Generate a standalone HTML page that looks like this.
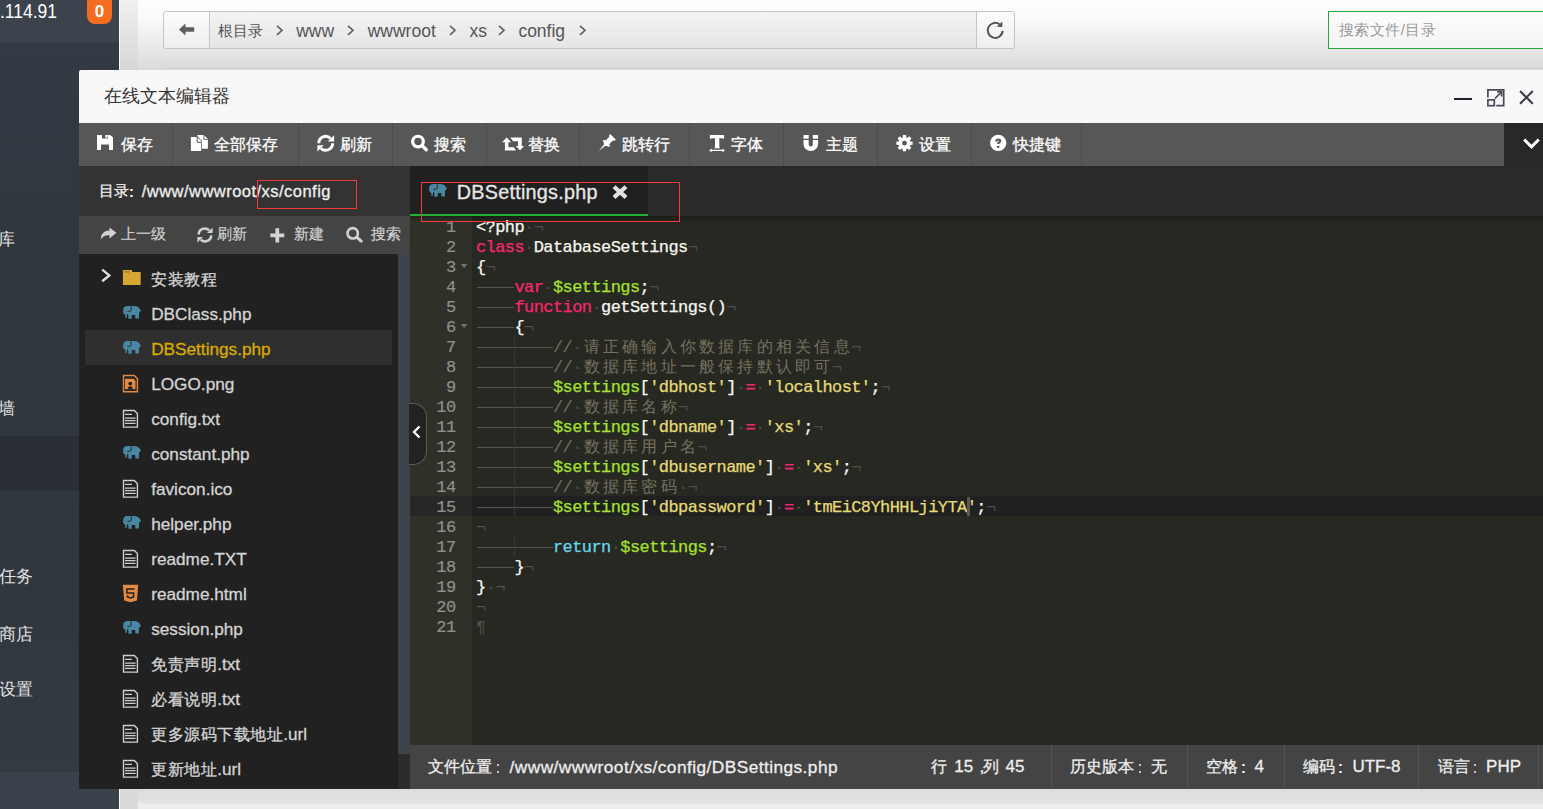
<!DOCTYPE html><html><head><meta charset="utf-8"><style>
*{box-sizing:border-box;margin:0;padding:0}
html,body{width:1543px;height:809px;overflow:hidden}
body{position:relative;background:#e4e4e4;font-family:"Liberation Sans",sans-serif;color:#333}
.a{position:absolute}
svg{position:absolute;display:block;overflow:visible}
.t{position:absolute;white-space:nowrap}
.mono{font-family:"Liberation Mono",monospace}
.cl{-webkit-text-stroke-width:0.25px;position:absolute;left:476px;height:20px;line-height:20px;font-family:"Liberation Mono",monospace;font-size:17px;letter-spacing:-0.58px;color:#f8f8f2;white-space:pre}
.ln{-webkit-text-stroke-width:0.2px;position:absolute;left:410px;width:45.6px;height:20px;line-height:20px;text-align:right;font-family:"Liberation Mono",monospace;font-size:17px;letter-spacing:-0.58px;color:#8f908a;white-space:pre}
.tb{display:inline-block;width:38.48px;height:20px;position:relative;vertical-align:top}
.tb:after{content:"";position:absolute;left:1px;right:0;top:9px;height:1px;background:#55554d}
.cj{display:inline-block;width:19.24px;letter-spacing:0;vertical-align:top;padding-left:1.8px;font-size:16px}
.c{-webkit-text-stroke-width:0}
.iv{color:#4f4e47;-webkit-text-stroke-width:0}
.k{color:#f92672}.v{color:#a6e22e}.s{color:#e6db74}.c{color:#75715e}.r{color:#66d9ef}
.red{position:absolute;border:1px solid #f33b3b}
.sk{-webkit-text-stroke-width:0.3px}
.sk2{-webkit-text-stroke-width:0.2px}
</style></head><body>
<div class="a" style="left:0;top:0;width:119px;height:809px;background:linear-gradient(#343a43 43px,#30363e 300px,#31373f 600px,#343a42 772px)"></div>
<div class="a" style="left:0;top:0;width:119px;height:43px;background:#3c434c"></div>
<div class="a" style="left:0;top:436px;width:119px;height:55px;background:#2a2f37"></div>
<div class="a" style="left:0;top:772px;width:119px;height:37px;background:#3c424b"></div>
<div class="t" style="left:-0.50px;top:11.17px;font-size:20.00px;line-height:0;color:#fff;letter-spacing:0.00px;transform:scaleX(0.875);transform-origin:0 0">.114.91</div>
<div class="a" style="left:87px;top:-6px;width:25px;height:30px;border-radius:8px;background:#f46d22"></div>
<div class="t" style="left:87px;top:2px;width:25px;text-align:center;font-size:17px;font-weight:bold;line-height:19px;color:#fff">0</div>
<div class="t" style="left:-35.60px;top:239.61px;font-size:17.00px;line-height:0;color:#e2e2e2;letter-spacing:0.00px;">数据库</div>
<div class="t" style="left:-35.60px;top:409.11px;font-size:17.00px;line-height:0;color:#e2e2e2;letter-spacing:0.00px;">防火墙</div>
<div class="t" style="left:-35.20px;top:577.31px;font-size:17.00px;line-height:0;color:#e2e2e2;letter-spacing:0.00px;">计划任务</div>
<div class="t" style="left:-35.20px;top:634.61px;font-size:17.00px;line-height:0;color:#e2e2e2;letter-spacing:0.00px;">软件商店</div>
<div class="t" style="left:-35.20px;top:690.11px;font-size:17.00px;line-height:0;color:#e2e2e2;letter-spacing:0.00px;">面板设置</div>
<div class="a" style="left:119px;top:0;width:19px;height:809px;background:linear-gradient(#f0f0f0,#d6d6d6 70px,#dadada)"></div>
<div class="a" style="left:119px;top:0;width:1px;height:809px;background:#fafafa"></div>
<div class="a" style="left:138px;top:0;width:1405px;height:70px;background:linear-gradient(#fefefe,#f9f9f9 20px,#dcdcdc 67px)"></div>
<div class="a" style="left:163px;top:68px;width:1380px;height:1px;background:#d0d0d0"></div>
<div class="a" style="left:163px;top:11px;width:852px;height:38px;border:1px solid #c4c4c4;border-radius:3px;background:linear-gradient(#f3f3f3,#e5e5e5);overflow:hidden"><div class="a" style="left:0;top:0;width:46px;height:36px;background:linear-gradient(#fcfcfc,#eeeeee);border-right:1px solid #c6c6c6"></div><div class="a" style="right:0;top:0;width:38px;height:36px;background:linear-gradient(#fcfcfc,#eeeeee);border-left:1px solid #c6c6c6"></div></div>
<svg style="left:179px;top:23px" width="16" height="14" viewBox="0 0 16 14"><path fill="#5e5e5e" d="M0,6.5 L6.5,0.5 V4.3 H15.2 V8.7 H6.5 V12.5 Z"/></svg>
<svg style="left:984px;top:19px" width="22" height="22" viewBox="0 0 22 22"><path fill="none" stroke="#555" stroke-width="2" d="M18.67,11.95 A7.5,7.5 0 1 1 15.6,5.3"/><path fill="#555" d="M12.6,7.7 L18.3,2.6 L18.3,7.9 Z"/></svg>
<div class="t" style="left:218.00px;top:31.00px;font-size:15.30px;line-height:0;color:#555;letter-spacing:0.00px;">根目录</div>
<div class="t" style="left:296.20px;top:30.94px;font-size:17.50px;line-height:0;color:#555;letter-spacing:0.00px;">www</div>
<div class="t" style="left:367.70px;top:30.94px;font-size:17.50px;line-height:0;color:#555;letter-spacing:0.00px;">wwwroot</div>
<div class="t" style="left:469.60px;top:30.94px;font-size:17.50px;line-height:0;color:#555;letter-spacing:0.00px;">xs</div>
<div class="t" style="left:518.40px;top:30.94px;font-size:17.50px;line-height:0;color:#555;letter-spacing:0.00px;">config</div>
<svg style="left:276.0px;top:25.3px" width="8" height="11" viewBox="0 0 8 11"><path fill="none" stroke="#646464" stroke-width="1.7" d="M1,0.8 L6,5.3 L1,9.8"/></svg>
<svg style="left:346.6px;top:25.3px" width="8" height="11" viewBox="0 0 8 11"><path fill="none" stroke="#646464" stroke-width="1.7" d="M1,0.8 L6,5.3 L1,9.8"/></svg>
<svg style="left:449.2px;top:25.3px" width="8" height="11" viewBox="0 0 8 11"><path fill="none" stroke="#646464" stroke-width="1.7" d="M1,0.8 L6,5.3 L1,9.8"/></svg>
<svg style="left:497.8px;top:25.3px" width="8" height="11" viewBox="0 0 8 11"><path fill="none" stroke="#646464" stroke-width="1.7" d="M1,0.8 L6,5.3 L1,9.8"/></svg>
<svg style="left:578.8px;top:25.3px" width="8" height="11" viewBox="0 0 8 11"><path fill="none" stroke="#646464" stroke-width="1.7" d="M1,0.8 L6,5.3 L1,9.8"/></svg>
<div class="a" style="left:1328px;top:11px;width:230px;height:38px;border:1px solid #2aa53c;background:linear-gradient(#fdfdfd,#f3f3f3)"></div>
<div class="t" style="left:1338.80px;top:30.40px;font-size:15.00px;line-height:0;color:#999;letter-spacing:0.50px;">搜索文件/目录</div>
<div class="a" style="left:138px;top:789px;width:1405px;height:20px;background:#ededed"></div>
<div class="a" style="left:138px;top:776px;width:1440px;height:28px;border-radius:7px;background:linear-gradient(#d9d9d9,#e2e2e2)"></div>
<div class="a" style="left:79px;top:70px;width:1464px;height:53px;background:#f8f8f8;border-top-left-radius:2px"></div>
<div class="t" style="left:104px;top:85px;font-size:18px;line-height:22px;color:#333">在线文本编辑器</div>
<div class="a" style="left:1454px;top:98px;width:18px;height:2px;background:#20202c"></div>
<svg style="left:1484px;top:86px" width="24" height="24" viewBox="0 0 24 24"><g fill="none" stroke="#4a4a56" stroke-width="1.7"><path d="M3.9,11.6 V3.9 H19.7 V19.7 H12.2"/><rect x="3.9" y="13.9" width="6.4" height="5.8"/><path d="M11,12.5 L17,6.5"/><path d="M13.2,5.9 H17.6 V10.4"/></g></svg>
<svg style="left:1515px;top:86px" width="24" height="24" viewBox="0 0 24 24"><path fill="none" stroke="#3a3a48" stroke-width="2" d="M5,5 L17.8,17.8 M17.8,5 L5,17.8"/></svg>
<div class="a" style="left:79px;top:123px;width:1425px;height:43px;background:#575757"></div>
<div class="a" style="left:1504px;top:123px;width:39px;height:43px;background:#282828"></div>
<svg style="left:1520px;top:136px" width="22" height="16" viewBox="0 0 22 16"><path fill="none" stroke="#fff" stroke-width="3" d="M4.2,3.5 L11.5,10.8 L18.8,3.5"/></svg>
<div class="a" style="left:172px;top:123px;width:1px;height:43px;background:#4b4b4b"></div>
<div class="a" style="left:298px;top:123px;width:1px;height:43px;background:#4b4b4b"></div>
<div class="a" style="left:392px;top:123px;width:1px;height:43px;background:#4b4b4b"></div>
<div class="a" style="left:486px;top:123px;width:1px;height:43px;background:#4b4b4b"></div>
<div class="a" style="left:579px;top:123px;width:1px;height:43px;background:#4b4b4b"></div>
<div class="a" style="left:689px;top:123px;width:1px;height:43px;background:#4b4b4b"></div>
<div class="a" style="left:783px;top:123px;width:1px;height:43px;background:#4b4b4b"></div>
<div class="a" style="left:877px;top:123px;width:1px;height:43px;background:#4b4b4b"></div>
<div class="a" style="left:971px;top:123px;width:1px;height:43px;background:#4b4b4b"></div>
<div class="a" style="left:1081px;top:123px;width:1px;height:43px;background:#4b4b4b"></div>
<div style="position:absolute;white-space:nowrap;left:120.6px;top:135px;font-size:16px;line-height:20px;color:#fff" class="t sk">保存</div>
<div style="position:absolute;white-space:nowrap;left:214.2px;top:135px;font-size:16px;line-height:20px;color:#fff" class="t sk">全部保存</div>
<div style="position:absolute;white-space:nowrap;left:340.0px;top:135px;font-size:16px;line-height:20px;color:#fff" class="t sk">刷新</div>
<div style="position:absolute;white-space:nowrap;left:433.8px;top:135px;font-size:16px;line-height:20px;color:#fff" class="t sk">搜索</div>
<div style="position:absolute;white-space:nowrap;left:527.6px;top:135px;font-size:16px;line-height:20px;color:#fff" class="t sk">替换</div>
<div style="position:absolute;white-space:nowrap;left:621.5px;top:135px;font-size:16px;line-height:20px;color:#fff" class="t sk">跳转行</div>
<div style="position:absolute;white-space:nowrap;left:731.2px;top:135px;font-size:16px;line-height:20px;color:#fff" class="t sk">字体</div>
<div style="position:absolute;white-space:nowrap;left:825.5px;top:135px;font-size:16px;line-height:20px;color:#fff" class="t sk">主题</div>
<div style="position:absolute;white-space:nowrap;left:919.0px;top:135px;font-size:16px;line-height:20px;color:#fff" class="t sk">设置</div>
<div style="position:absolute;white-space:nowrap;left:1012.9px;top:135px;font-size:16px;line-height:20px;color:#fff" class="t sk">快捷键</div>
<svg style="left:97px;top:135px" width="16" height="15" viewBox="0 0 16 15"><path fill="#ffffff" d="M0,0 H13 L16,2.3 V15 H12 V9.4 H4 V15 H0 Z"/><rect x="5" y="0" width="6" height="3.5" fill="#575757"/><rect x="8.3" y="0" width="2.3" height="2.7" fill="#ffffff"/></svg>
<svg style="left:186px;top:132px" width="26" height="22" viewBox="0 0 26 22"><path fill="#ffffff" d="M11.4,2.9 H17.9 L21.9,6.9 V16.7 H11.4 Z"/><path fill="none" stroke="#575757" stroke-width="0.9" d="M17.9,2.9 V7.3 H21.9"/><path fill="#575757" d="M4.2,4.2 H11.4 L15.9,8.7 V19.6 H4.2 Z"/><path fill="#ffffff" d="M4.9,4.9 H11.1 L15.2,9 V18.9 H4.9 Z"/><path fill="none" stroke="#575757" stroke-width="1" d="M11.2,4.9 V10.4 H15.2"/></svg>
<svg style="left:317px;top:134.5px" width="17" height="17" viewBox="0 0 17 17"><g fill="none" stroke="#ffffff" stroke-width="2.9"><path d="M1.8,8.3 A6.9,6.9 0 0 1 13.6,3.4"/><path d="M15.6,8.3 A6.9,6.9 0 0 1 3.8,13.2"/></g><path fill="#ffffff" d="M17.1,0.2 V6.5 H10.8 Z M0.4,16.5 V10.3 H6.7 Z"/></svg>
<svg style="left:410px;top:134px" width="19" height="18" viewBox="0 0 19 18"><circle cx="8" cy="7.6" r="5.35" fill="none" stroke="#ffffff" stroke-width="3.2"/><path stroke="#ffffff" stroke-width="3.4" stroke-linecap="round" d="M12.2,11.8 L16.3,15.7"/></svg>
<svg style="left:502px;top:136.5px" width="23" height="14" viewBox="0 0 23 14"><path fill="#ffffff" d="M0,5.2 L4.7,0.4 L9.2,5.2 H6.4 V10.3 H11.9 L14,13.6 H2.9 V5.2 Z M8.3,0.5 H19.8 V9.1 H22.1 L18,13.6 L13.9,9.1 H16 V4.2 H11 Z"/></svg>
<svg style="left:596px;top:132px" width="24" height="22" viewBox="0 0 24 22"><path fill="#ffffff" transform="translate(2.8,19) rotate(45)" d="M0,0 L-0.9,-8.5 L-5,-10.6 L-2.6,-12.5 V-17.3 L-3.9,-18.5 V-20 H3.9 V-18.5 L2.6,-17.3 V-12.5 L5,-10.6 L0.9,-8.5 Z"/></svg>
<svg style="left:706px;top:132px" width="22" height="22" viewBox="0 0 22 22"><path fill="#ffffff" d="M3.9,2.9 H18.1 V7.1 Q17,6.3 15.5,6.3 H13.3 V15.4 H14 V16.3 H8.3 V15.4 H9 V6.3 H6.5 Q5,6.3 3.9,7.1 Z M3,18.4 L5.6,16.4 V17.7 H16.4 V16.4 L19,18.4 L16.4,20.3 V19.1 H5.6 V20.3 Z"/></svg>
<svg style="left:800px;top:132px" width="22" height="22" viewBox="0 0 22 22"><path fill="#ffffff" d="M3.5,2.9 H8.7 V6.8 H3.5 Z M12.8,2.9 H18.1 V6.8 H12.8 Z M3.5,7.9 H8.7 V12.4 A2.05,2.05 0 0 0 12.8,12.4 V7.9 H18.1 V12 A7.3,7 0 0 1 3.5,12 Z"/></svg>
<svg style="left:896px;top:134.6px" width="17" height="17" viewBox="0 0 17 17"><path fill="#ffffff" fill-rule="evenodd" d="M6.73,2.47 L6.85,0.07 L10.15,0.07 L10.27,2.47 L11.30,2.89 L13.09,1.28 L15.42,3.61 L13.81,5.40 L14.23,6.43 L16.63,6.55 L16.63,9.85 L14.23,9.97 L13.81,11.00 L15.42,12.79 L13.09,15.12 L11.30,13.51 L10.27,13.93 L10.15,16.33 L6.85,16.33 L6.73,13.93 L5.70,13.51 L3.91,15.12 L1.58,12.79 L3.19,11.00 L2.77,9.97 L0.37,9.85 L0.37,6.55 L2.77,6.43 L3.19,5.40 L1.58,3.61 L3.91,1.28 L5.70,2.89Z M8.5,5.8 A2.4,2.4 0 1 0 8.5,10.6 A2.4,2.4 0 1 0 8.5,5.8 Z"/></svg>
<svg style="left:987px;top:132px" width="22" height="22" viewBox="0 0 22 22"><circle cx="11.2" cy="10.95" r="8.1" fill="#ffffff"/><path fill="#575757" d="M8.2,9.6 Q8.3,6.5 11.3,6.5 Q14.3,6.5 14.3,9.1 Q14.3,10.6 12.8,11.3 Q12.4,11.6 12.4,12.1 H10 Q10,10.7 11.1,10.1 Q11.9,9.7 11.9,9.2 Q11.9,8.6 11.2,8.6 Q10.5,8.6 10.4,9.8 Z"/><rect x="9.9" y="13.9" width="2.5" height="1.9" fill="#575757"/></svg>
<div class="a" style="left:79px;top:166px;width:331px;height:623px;background:#212121"></div>
<div class="a" style="left:79px;top:166px;width:331px;height:50px;background:#333"></div>
<div class="t sk" style="left:98.60px;top:191.33px;font-size:15.20px;line-height:0;color:#efefef;letter-spacing:0.00px;">目录</div>
<div class="a" style="left:130.20px;top:188.80px;width:2.40px;height:2.40px;border-radius:1px;background:#efefef"></div><div class="a" style="left:130.20px;top:195.10px;width:2.40px;height:2.40px;border-radius:1px;background:#efefef"></div>
<div class="t sk" style="left:141.80px;top:191.08px;font-size:16.50px;line-height:0;color:#efefef;letter-spacing:0.47px;">/www/wwwroot/xs/config</div>
<div class="a" style="left:79px;top:216px;width:331px;height:38px;background:#444"></div>
<svg style="left:100px;top:227px" width="17" height="14" viewBox="0 0 17 14"><path fill="#d2d2d2" d="M16.5,5.8 L9.5,0.6 V3.6 C3.5,3.8 0.8,7.5 0.8,12.8 C2.5,9.5 5,8.3 9.5,8.3 V11.6 Z"/></svg>
<div class="t sk2" style="left:120.70px;top:234.04px;font-size:14.90px;line-height:0;color:#d2d2d2;letter-spacing:0.00px;">上一级</div>
<svg style="left:196.5px;top:226.5px" width="16" height="16" viewBox="0 0 16 16"><g fill="none" stroke="#d2d2d2" stroke-width="2.5"><path d="M1.7,7.6 A6.1,6.1 0 0 1 12.2,3.4"/><path d="M14.2,8.4 A6.1,6.1 0 0 1 3.8,12.6"/></g><path fill="#d2d2d2" d="M15.6,0.5 V6.1 H10 Z M0.4,15.6 V10 H6 Z"/></svg>
<div class="t sk2" style="left:216.70px;top:234.04px;font-size:14.90px;line-height:0;color:#d2d2d2;letter-spacing:0.00px;">刷新</div>
<svg style="left:269.5px;top:227.5px" width="15" height="15" viewBox="0 0 15 15"><path fill="#d2d2d2" d="M5.4,0.3 H9.2 V5.4 H14.3 V9.2 H9.2 V14.5 H5.4 V9.2 H0.3 V5.4 H5.4 Z"/></svg>
<div class="t sk2" style="left:293.70px;top:234.04px;font-size:14.90px;line-height:0;color:#d2d2d2;letter-spacing:0.00px;">新建</div>
<svg style="left:346px;top:226px" width="18" height="18" viewBox="0 0 18 18"><circle cx="6.7" cy="7.3" r="5.2" fill="none" stroke="#d2d2d2" stroke-width="2.6"/><path stroke="#d2d2d2" stroke-width="3" stroke-linecap="round" d="M10.6,11.2 L15.2,15.2"/></svg>
<div class="t sk2" style="left:370.70px;top:234.04px;font-size:14.90px;line-height:0;color:#d2d2d2;letter-spacing:0.00px;">搜索</div>
<div class="a" style="left:398px;top:254px;width:12px;height:535px;background:#2b2b2b"></div>
<div class="a" style="left:398px;top:254px;width:12px;height:500px;background:#3d424b"></div>
<div class="a" style="left:85px;top:330px;width:307px;height:35px;background:#2f2f2f"></div>
<div class="t sk" style="left:151.20px;top:278.54px;font-size:17.20px;line-height:0;color:#d4d4d4;letter-spacing:0.00px;"><span style="font-size:16px;letter-spacing:0.5px">安装教程</span></div>
<svg style="left:98px;top:264px" width="48" height="28" viewBox="0 0 48 28"><path fill="none" stroke="#dedede" stroke-width="2.4" d="M4.2,5.6 L11.3,11.4 L4.2,17.2"/><path fill="#d6a833" d="M24.9,5.9 H33.7 L34.3,8 H42.7 V20.9 H24.9 Z"/><rect x="26.3" y="7.1" width="5.5" height="1.6" fill="#a98224"/></svg>
<div class="t sk" style="left:151.20px;top:313.54px;font-size:17.20px;line-height:0;color:#d4d4d4;letter-spacing:0.00px;">DBClass.php</div>
<svg style="left:120.0px;top:303.0px" width="24" height="19" viewBox="0 0 24 19"><path fill="#4a87a3" d="M3,8.2 C3,4.6 4.6,3 7.5,3 L10.6,3 L11.3,3.4 C11.8,3.1 12.5,3 13.5,3 C17.5,3 20,5 21,7.9 L19.5,9 L19,10.6 L18.9,15.6 L15.4,15.6 L15.2,11.9 L11.7,11.9 L11.6,15.8 L8.4,15.8 L8.3,11.6 C7.6,11.5 7.3,11.3 7,11 C6.8,12 7.2,13 6.8,14.2 C6.5,15 5.6,15.1 4.9,14.6 L5.6,13.7 C5.8,13 5.3,12.2 4.6,11.4 C3.4,10.4 3,9.4 3,8.2 Z"/><path fill="none" stroke="#212121" stroke-width="0.9" d="M11.2,3.5 V7.5 Q10.8,8.4 7.4,8.4"/><circle cx="4.6" cy="7.4" r="0.45" fill="#212121" opacity="0.7"/></svg>
<div class="t sk" style="left:151.20px;top:348.54px;font-size:17.20px;line-height:0;color:#d9ab00;letter-spacing:0.00px;">DBSettings.php</div>
<svg style="left:120.0px;top:338.0px" width="24" height="19" viewBox="0 0 24 19"><path fill="#4a87a3" d="M3,8.2 C3,4.6 4.6,3 7.5,3 L10.6,3 L11.3,3.4 C11.8,3.1 12.5,3 13.5,3 C17.5,3 20,5 21,7.9 L19.5,9 L19,10.6 L18.9,15.6 L15.4,15.6 L15.2,11.9 L11.7,11.9 L11.6,15.8 L8.4,15.8 L8.3,11.6 C7.6,11.5 7.3,11.3 7,11 C6.8,12 7.2,13 6.8,14.2 C6.5,15 5.6,15.1 4.9,14.6 L5.6,13.7 C5.8,13 5.3,12.2 4.6,11.4 C3.4,10.4 3,9.4 3,8.2 Z"/><path fill="none" stroke="#212121" stroke-width="0.9" d="M11.2,3.5 V7.5 Q10.8,8.4 7.4,8.4"/><circle cx="4.6" cy="7.4" r="0.45" fill="#212121" opacity="0.7"/></svg>
<div class="t sk" style="left:151.20px;top:383.54px;font-size:17.20px;line-height:0;color:#d4d4d4;letter-spacing:0.00px;">LOGO.png</div>
<svg style="left:118px;top:370.0px" width="26" height="26" viewBox="0 0 26 26"><path fill="none" stroke="#e38a45" stroke-width="1.4" d="M5.5,5.5 H16.3 L19.4,8.6 V21.8 H5.5 Z"/><path fill="#e38a45" d="M7,8.8 H15.6 L17.5,10.7 V19.3 H7 Z"/><circle cx="12.3" cy="13.6" r="1.9" fill="#212121"/><path fill="#212121" d="M9.8,19.3 Q9.8,16.3 12.3,16.3 Q14.8,16.3 14.8,19.3 Z"/></svg>
<div class="t sk" style="left:151.20px;top:418.54px;font-size:17.20px;line-height:0;color:#d4d4d4;letter-spacing:0.00px;">config.txt</div>
<svg style="left:118px;top:405.0px" width="26" height="26" viewBox="0 0 26 26"><path fill="none" stroke="#cfcfcf" stroke-width="1.4" d="M5.5,5.5 H16.3 L19.4,8.6 V22.1 H5.5 Z"/><path stroke="#cfcfcf" stroke-width="1.2" d="M7,9.3 H13.9 M7,13.2 H17.6 M7,15.7 H17.6 M7,18.3 H17.6"/></svg>
<div class="t sk" style="left:151.20px;top:453.54px;font-size:17.20px;line-height:0;color:#d4d4d4;letter-spacing:0.00px;">constant.php</div>
<svg style="left:120.0px;top:443.0px" width="24" height="19" viewBox="0 0 24 19"><path fill="#4a87a3" d="M3,8.2 C3,4.6 4.6,3 7.5,3 L10.6,3 L11.3,3.4 C11.8,3.1 12.5,3 13.5,3 C17.5,3 20,5 21,7.9 L19.5,9 L19,10.6 L18.9,15.6 L15.4,15.6 L15.2,11.9 L11.7,11.9 L11.6,15.8 L8.4,15.8 L8.3,11.6 C7.6,11.5 7.3,11.3 7,11 C6.8,12 7.2,13 6.8,14.2 C6.5,15 5.6,15.1 4.9,14.6 L5.6,13.7 C5.8,13 5.3,12.2 4.6,11.4 C3.4,10.4 3,9.4 3,8.2 Z"/><path fill="none" stroke="#212121" stroke-width="0.9" d="M11.2,3.5 V7.5 Q10.8,8.4 7.4,8.4"/><circle cx="4.6" cy="7.4" r="0.45" fill="#212121" opacity="0.7"/></svg>
<div class="t sk" style="left:151.20px;top:488.54px;font-size:17.20px;line-height:0;color:#d4d4d4;letter-spacing:0.00px;">favicon.ico</div>
<svg style="left:118px;top:475.0px" width="26" height="26" viewBox="0 0 26 26"><path fill="none" stroke="#cfcfcf" stroke-width="1.4" d="M5.5,5.5 H16.3 L19.4,8.6 V22.1 H5.5 Z"/><path stroke="#cfcfcf" stroke-width="1.2" d="M7,9.3 H13.9 M7,13.2 H17.6 M7,15.7 H17.6 M7,18.3 H17.6"/></svg>
<div class="t sk" style="left:151.20px;top:523.54px;font-size:17.20px;line-height:0;color:#d4d4d4;letter-spacing:0.00px;">helper.php</div>
<svg style="left:120.0px;top:513.0px" width="24" height="19" viewBox="0 0 24 19"><path fill="#4a87a3" d="M3,8.2 C3,4.6 4.6,3 7.5,3 L10.6,3 L11.3,3.4 C11.8,3.1 12.5,3 13.5,3 C17.5,3 20,5 21,7.9 L19.5,9 L19,10.6 L18.9,15.6 L15.4,15.6 L15.2,11.9 L11.7,11.9 L11.6,15.8 L8.4,15.8 L8.3,11.6 C7.6,11.5 7.3,11.3 7,11 C6.8,12 7.2,13 6.8,14.2 C6.5,15 5.6,15.1 4.9,14.6 L5.6,13.7 C5.8,13 5.3,12.2 4.6,11.4 C3.4,10.4 3,9.4 3,8.2 Z"/><path fill="none" stroke="#212121" stroke-width="0.9" d="M11.2,3.5 V7.5 Q10.8,8.4 7.4,8.4"/><circle cx="4.6" cy="7.4" r="0.45" fill="#212121" opacity="0.7"/></svg>
<div class="t sk" style="left:151.20px;top:558.54px;font-size:17.20px;line-height:0;color:#d4d4d4;letter-spacing:0.00px;">readme.TXT</div>
<svg style="left:118px;top:545.0px" width="26" height="26" viewBox="0 0 26 26"><path fill="none" stroke="#cfcfcf" stroke-width="1.4" d="M5.5,5.5 H16.3 L19.4,8.6 V22.1 H5.5 Z"/><path stroke="#cfcfcf" stroke-width="1.2" d="M7,9.3 H13.9 M7,13.2 H17.6 M7,15.7 H17.6 M7,18.3 H17.6"/></svg>
<div class="t sk" style="left:151.20px;top:593.54px;font-size:17.20px;line-height:0;color:#d4d4d4;letter-spacing:0.00px;">readme.html</div>
<svg style="left:118px;top:580.0px" width="26" height="26" viewBox="0 0 26 26"><path fill="#e38a45" d="M4.8,4.8 H20.3 L18.9,20.5 L12.5,22.2 L6.2,20.5 Z"/><path fill="none" stroke="#212121" stroke-width="1.5" d="M16.6,9.1 H8.9 V12.9 H15.6 V17 L12.5,18 L9.5,17 V15.3"/></svg>
<div class="t sk" style="left:151.20px;top:628.54px;font-size:17.20px;line-height:0;color:#d4d4d4;letter-spacing:0.00px;">session.php</div>
<svg style="left:120.0px;top:618.0px" width="24" height="19" viewBox="0 0 24 19"><path fill="#4a87a3" d="M3,8.2 C3,4.6 4.6,3 7.5,3 L10.6,3 L11.3,3.4 C11.8,3.1 12.5,3 13.5,3 C17.5,3 20,5 21,7.9 L19.5,9 L19,10.6 L18.9,15.6 L15.4,15.6 L15.2,11.9 L11.7,11.9 L11.6,15.8 L8.4,15.8 L8.3,11.6 C7.6,11.5 7.3,11.3 7,11 C6.8,12 7.2,13 6.8,14.2 C6.5,15 5.6,15.1 4.9,14.6 L5.6,13.7 C5.8,13 5.3,12.2 4.6,11.4 C3.4,10.4 3,9.4 3,8.2 Z"/><path fill="none" stroke="#212121" stroke-width="0.9" d="M11.2,3.5 V7.5 Q10.8,8.4 7.4,8.4"/><circle cx="4.6" cy="7.4" r="0.45" fill="#212121" opacity="0.7"/></svg>
<div class="t sk" style="left:151.20px;top:663.54px;font-size:17.20px;line-height:0;color:#d4d4d4;letter-spacing:0.00px;"><span style="font-size:16px;letter-spacing:0.5px">免责声明</span>.txt</div>
<svg style="left:118px;top:650.0px" width="26" height="26" viewBox="0 0 26 26"><path fill="none" stroke="#cfcfcf" stroke-width="1.4" d="M5.5,5.5 H16.3 L19.4,8.6 V22.1 H5.5 Z"/><path stroke="#cfcfcf" stroke-width="1.2" d="M7,9.3 H13.9 M7,13.2 H17.6 M7,15.7 H17.6 M7,18.3 H17.6"/></svg>
<div class="t sk" style="left:151.20px;top:698.54px;font-size:17.20px;line-height:0;color:#d4d4d4;letter-spacing:0.00px;"><span style="font-size:16px;letter-spacing:0.5px">必看说明</span>.txt</div>
<svg style="left:118px;top:685.0px" width="26" height="26" viewBox="0 0 26 26"><path fill="none" stroke="#cfcfcf" stroke-width="1.4" d="M5.5,5.5 H16.3 L19.4,8.6 V22.1 H5.5 Z"/><path stroke="#cfcfcf" stroke-width="1.2" d="M7,9.3 H13.9 M7,13.2 H17.6 M7,15.7 H17.6 M7,18.3 H17.6"/></svg>
<div class="t sk" style="left:151.20px;top:733.54px;font-size:17.20px;line-height:0;color:#d4d4d4;letter-spacing:0.00px;"><span style="font-size:16px;letter-spacing:0.5px">更多源码下载地址</span>.url</div>
<svg style="left:118px;top:720.0px" width="26" height="26" viewBox="0 0 26 26"><path fill="none" stroke="#cfcfcf" stroke-width="1.4" d="M5.5,5.5 H16.3 L19.4,8.6 V22.1 H5.5 Z"/><path stroke="#cfcfcf" stroke-width="1.2" d="M7,9.3 H13.9 M7,13.2 H17.6 M7,15.7 H17.6 M7,18.3 H17.6"/></svg>
<div class="t sk" style="left:151.20px;top:768.54px;font-size:17.20px;line-height:0;color:#d4d4d4;letter-spacing:0.00px;"><span style="font-size:16px;letter-spacing:0.5px">更新地址</span>.url</div>
<svg style="left:118px;top:755.0px" width="26" height="26" viewBox="0 0 26 26"><path fill="none" stroke="#cfcfcf" stroke-width="1.4" d="M5.5,5.5 H16.3 L19.4,8.6 V22.1 H5.5 Z"/><path stroke="#cfcfcf" stroke-width="1.2" d="M7,9.3 H13.9 M7,13.2 H17.6 M7,15.7 H17.6 M7,18.3 H17.6"/></svg>
<div class="a" style="left:410px;top:166px;width:1133px;height:50px;background:#2a2a2a"></div>
<div class="a" style="left:410px;top:166px;width:238px;height:50px;background:#202020"></div>
<div class="a" style="left:410px;top:214px;width:238px;height:2px;background:#20b03a"></div>
<svg style="left:425.8px;top:181.3px" width="24" height="19" viewBox="0 0 24 19"><path fill="#4a87a3" d="M3,8.2 C3,4.6 4.6,3 7.5,3 L10.6,3 L11.3,3.4 C11.8,3.1 12.5,3 13.5,3 C17.5,3 20,5 21,7.9 L19.5,9 L19,10.6 L18.9,15.6 L15.4,15.6 L15.2,11.9 L11.7,11.9 L11.6,15.8 L8.4,15.8 L8.3,11.6 C7.6,11.5 7.3,11.3 7,11 C6.8,12 7.2,13 6.8,14.2 C6.5,15 5.6,15.1 4.9,14.6 L5.6,13.7 C5.8,13 5.3,12.2 4.6,11.4 C3.4,10.4 3,9.4 3,8.2 Z"/><path fill="none" stroke="#202020" stroke-width="0.9" d="M11.2,3.5 V7.5 Q10.8,8.4 7.4,8.4"/><circle cx="4.6" cy="7.4" r="0.45" fill="#202020" opacity="0.7"/></svg>
<div class="t sk" style="left:456.80px;top:192.04px;font-size:19.80px;line-height:0;color:#e6e6e6;letter-spacing:0.25px;">DBSettings.php</div>
<svg style="left:610px;top:183px" width="20" height="18" viewBox="0 0 20 18"><path fill="none" stroke="#e2e2e2" stroke-width="4.2" d="M4,3.8 L16,14.4 M16,3.8 L4,14.4"/></svg>
<div class="a" style="left:410px;top:216px;width:1133px;height:529px;background:#272822"></div>
<div class="a" style="left:410px;top:216px;width:62px;height:529px;background:#2f3129"></div>
<div class="a" style="left:410px;top:216px;width:1133px;height:6px;background:linear-gradient(rgba(0,0,0,0.3),rgba(0,0,0,0))"></div>
<div class="a" style="left:410px;top:496px;width:62px;height:20px;background:#272727"></div>
<div class="a" style="left:472px;top:496px;width:1071px;height:20px;background:#202020"></div>
<div class="a" style="left:514px;top:336px;width:1px;height:20px;background:repeating-linear-gradient(#4a4a44 0 1px,transparent 1px 2px)"></div>
<div class="a" style="left:514px;top:356px;width:1px;height:20px;background:repeating-linear-gradient(#4a4a44 0 1px,transparent 1px 2px)"></div>
<div class="a" style="left:514px;top:376px;width:1px;height:20px;background:repeating-linear-gradient(#4a4a44 0 1px,transparent 1px 2px)"></div>
<div class="a" style="left:514px;top:396px;width:1px;height:20px;background:repeating-linear-gradient(#4a4a44 0 1px,transparent 1px 2px)"></div>
<div class="a" style="left:514px;top:416px;width:1px;height:20px;background:repeating-linear-gradient(#4a4a44 0 1px,transparent 1px 2px)"></div>
<div class="a" style="left:514px;top:436px;width:1px;height:20px;background:repeating-linear-gradient(#4a4a44 0 1px,transparent 1px 2px)"></div>
<div class="a" style="left:514px;top:456px;width:1px;height:20px;background:repeating-linear-gradient(#4a4a44 0 1px,transparent 1px 2px)"></div>
<div class="a" style="left:514px;top:476px;width:1px;height:20px;background:repeating-linear-gradient(#4a4a44 0 1px,transparent 1px 2px)"></div>
<div class="a" style="left:514px;top:496px;width:1px;height:20px;background:repeating-linear-gradient(#4a4a44 0 1px,transparent 1px 2px)"></div>
<div class="a" style="left:514px;top:536px;width:1px;height:20px;background:repeating-linear-gradient(#4a4a44 0 1px,transparent 1px 2px)"></div>
<div class="ln" style="top:218px">1</div>
<div class="cl" style="top:218px">&lt;?php<span class="iv">·</span><span class="iv">¬</span></div>
<div class="ln" style="top:238px">2</div>
<div class="cl" style="top:238px"><span class="k">class</span><span class="iv">·</span>DatabaseSettings<span class="iv">¬</span></div>
<div class="ln" style="top:258px">3</div>
<div class="cl" style="top:258px">{<span class="iv">¬</span></div>
<div class="ln" style="top:278px">4</div>
<div class="cl" style="top:278px"><span class="tb"></span><span class="k">var</span><span class="iv">·</span><span class="v">$settings</span>;<span class="iv">¬</span></div>
<div class="ln" style="top:298px">5</div>
<div class="cl" style="top:298px"><span class="tb"></span><span class="k">function</span><span class="iv">·</span>getSettings()<span class="iv">¬</span></div>
<div class="ln" style="top:318px">6</div>
<div class="cl" style="top:318px"><span class="tb"></span>{<span class="iv">¬</span></div>
<div class="ln" style="top:338px">7</div>
<div class="cl" style="top:338px"><span class="tb"></span><span class="tb"></span><span class="c">//</span><span class="iv">·</span><span class="c"><span class="cj">请</span><span class="cj">正</span><span class="cj">确</span><span class="cj">输</span><span class="cj">入</span><span class="cj">你</span><span class="cj">数</span><span class="cj">据</span><span class="cj">库</span><span class="cj">的</span><span class="cj">相</span><span class="cj">关</span><span class="cj">信</span><span class="cj">息</span></span><span class="iv">¬</span></div>
<div class="ln" style="top:358px">8</div>
<div class="cl" style="top:358px"><span class="tb"></span><span class="tb"></span><span class="c">//</span><span class="iv">·</span><span class="c"><span class="cj">数</span><span class="cj">据</span><span class="cj">库</span><span class="cj">地</span><span class="cj">址</span><span class="cj">一</span><span class="cj">般</span><span class="cj">保</span><span class="cj">持</span><span class="cj">默</span><span class="cj">认</span><span class="cj">即</span><span class="cj">可</span></span><span class="iv">¬</span></div>
<div class="ln" style="top:378px">9</div>
<div class="cl" style="top:378px"><span class="tb"></span><span class="tb"></span><span class="v">$settings</span>[<span class="s">'dbhost'</span>]<span class="iv">·</span><span class="k">=</span><span class="iv">·</span><span class="s">'localhost'</span>;<span class="iv">¬</span></div>
<div class="ln" style="top:398px">10</div>
<div class="cl" style="top:398px"><span class="tb"></span><span class="tb"></span><span class="c">//</span><span class="iv">·</span><span class="c"><span class="cj">数</span><span class="cj">据</span><span class="cj">库</span><span class="cj">名</span><span class="cj">称</span></span><span class="iv">¬</span></div>
<div class="ln" style="top:418px">11</div>
<div class="cl" style="top:418px"><span class="tb"></span><span class="tb"></span><span class="v">$settings</span>[<span class="s">'dbname'</span>]<span class="iv">·</span><span class="k">=</span><span class="iv">·</span><span class="s">'xs'</span>;<span class="iv">¬</span></div>
<div class="ln" style="top:438px">12</div>
<div class="cl" style="top:438px"><span class="tb"></span><span class="tb"></span><span class="c">//</span><span class="iv">·</span><span class="c"><span class="cj">数</span><span class="cj">据</span><span class="cj">库</span><span class="cj">用</span><span class="cj">户</span><span class="cj">名</span></span><span class="iv">¬</span></div>
<div class="ln" style="top:458px">13</div>
<div class="cl" style="top:458px"><span class="tb"></span><span class="tb"></span><span class="v">$settings</span>[<span class="s">'dbusername'</span>]<span class="iv">·</span><span class="k">=</span><span class="iv">·</span><span class="s">'xs'</span>;<span class="iv">¬</span></div>
<div class="ln" style="top:478px">14</div>
<div class="cl" style="top:478px"><span class="tb"></span><span class="tb"></span><span class="c">//</span><span class="iv">·</span><span class="c"><span class="cj">数</span><span class="cj">据</span><span class="cj">库</span><span class="cj">密</span><span class="cj">码</span></span><span class="iv">·</span><span class="iv">¬</span></div>
<div class="ln" style="top:498px">15</div>
<div class="cl" style="top:498px"><span class="tb"></span><span class="tb"></span><span class="v">$settings</span>[<span class="s">'dbpassword'</span>]<span class="iv">·</span><span class="k">=</span><span class="iv">·</span><span class="s">'tmEiC8YhHHLjiYTA'</span>;<span class="iv">¬</span></div>
<div class="ln" style="top:518px">16</div>
<div class="cl" style="top:518px"><span class="iv">¬</span></div>
<div class="ln" style="top:538px">17</div>
<div class="cl" style="top:538px"><span class="tb"></span><span class="tb"></span><span class="r">return</span><span class="iv">·</span><span class="v">$settings</span>;<span class="iv">¬</span></div>
<div class="ln" style="top:558px">18</div>
<div class="cl" style="top:558px"><span class="tb"></span>}<span class="iv">¬</span></div>
<div class="ln" style="top:578px">19</div>
<div class="cl" style="top:578px">}<span class="iv">·</span><span class="iv">¬</span></div>
<div class="ln" style="top:598px">20</div>
<div class="cl" style="top:598px"><span class="iv">¬</span></div>
<div class="ln" style="top:618px">21</div>
<div class="cl" style="top:618px"><span class="iv">¶</span></div>
<svg style="left:460px;top:262px" width="9" height="8" viewBox="0 0 9 8"><path fill="#75736a" d="M0.8,2 H7.4 L4.1,6 Z"/></svg>
<svg style="left:460px;top:322px" width="9" height="8" viewBox="0 0 9 8"><path fill="#75736a" d="M0.8,2 H7.4 L4.1,6 Z"/></svg>
<div class="a" style="left:967px;top:497px;width:2.5px;height:19px;background:#5a5a55"></div>
<div class="a" style="left:409px;top:403px;width:18px;height:62px;background:#222;border:1px solid #5a5a5a;border-left:none;border-radius:0 14px 14px 0"></div>
<svg style="left:409px;top:424px" width="14" height="16" viewBox="0 0 14 16"><path fill="none" stroke="#fff" stroke-width="2.3" d="M10.5,2.5 L5,8 L10.5,13.5"/></svg>
<div class="a" style="left:410px;top:745px;width:1133px;height:44px;background:#444"></div>
<div class="a" style="left:1051px;top:745px;width:1px;height:44px;background:#535353"></div>
<div class="a" style="left:1187px;top:745px;width:1px;height:44px;background:#535353"></div>
<div class="a" style="left:1284px;top:745px;width:1px;height:44px;background:#535353"></div>
<div class="a" style="left:1418px;top:745px;width:1px;height:44px;background:#535353"></div>
<div class="a" style="left:1538px;top:745px;width:1px;height:44px;background:#535353"></div>
<div class="t sk" style="left:427.80px;top:767.46px;font-size:16.00px;line-height:0;color:#eeeeee;letter-spacing:0.00px;">文件位置</div>
<div class="a" style="left:496.80px;top:763.80px;width:2.60px;height:2.60px;border-radius:1px;background:#eeeeee"></div><div class="a" style="left:496.80px;top:770.60px;width:2.60px;height:2.60px;border-radius:1px;background:#eeeeee"></div>
<div class="t sk" style="left:509.60px;top:767.01px;font-size:17.30px;line-height:0;color:#eeeeee;letter-spacing:0.44px;">/www/wwwroot/xs/config/DBSettings.php</div>
<div class="t sk" style="left:931.30px;top:767.46px;font-size:16.00px;line-height:0;color:#eeeeee;letter-spacing:0.00px;">行</div>
<div class="t sk" style="left:954.30px;top:767.11px;font-size:17.00px;line-height:0;color:#eeeeee;letter-spacing:0.00px;">15</div>
<div class="t sk" style="left:979.50px;top:767.11px;font-size:17.00px;line-height:0;color:#eeeeee;letter-spacing:0.00px;">,</div>
<div class="t sk" style="left:983.40px;top:767.46px;font-size:16.00px;line-height:0;color:#eeeeee;letter-spacing:0.00px;">列</div>
<div class="t sk" style="left:1005.60px;top:767.11px;font-size:17.00px;line-height:0;color:#eeeeee;letter-spacing:0.00px;">45</div>
<div class="t sk" style="left:1069.90px;top:767.46px;font-size:16.00px;line-height:0;color:#eeeeee;letter-spacing:0.00px;">历史版本</div>
<div class="a" style="left:1138.60px;top:763.80px;width:2.60px;height:2.60px;border-radius:1px;background:#eeeeee"></div><div class="a" style="left:1138.60px;top:770.60px;width:2.60px;height:2.60px;border-radius:1px;background:#eeeeee"></div>
<div class="t sk" style="left:1150.80px;top:767.46px;font-size:16.00px;line-height:0;color:#eeeeee;letter-spacing:0.00px;">无</div>
<div class="t sk" style="left:1206.00px;top:767.46px;font-size:16.00px;line-height:0;color:#eeeeee;letter-spacing:0.00px;">空格</div>
<div class="a" style="left:1242.40px;top:763.80px;width:2.60px;height:2.60px;border-radius:1px;background:#eeeeee"></div><div class="a" style="left:1242.40px;top:770.60px;width:2.60px;height:2.60px;border-radius:1px;background:#eeeeee"></div>
<div class="t sk" style="left:1254.60px;top:767.11px;font-size:17.00px;line-height:0;color:#eeeeee;letter-spacing:0.00px;">4</div>
<div class="t sk" style="left:1303.10px;top:767.46px;font-size:16.00px;line-height:0;color:#eeeeee;letter-spacing:0.00px;">编码</div>
<div class="a" style="left:1339.40px;top:763.80px;width:2.60px;height:2.60px;border-radius:1px;background:#eeeeee"></div><div class="a" style="left:1339.40px;top:770.60px;width:2.60px;height:2.60px;border-radius:1px;background:#eeeeee"></div>
<div class="t sk" style="left:1352.40px;top:767.11px;font-size:17.00px;line-height:0;color:#eeeeee;letter-spacing:0.00px;">UTF-8</div>
<div class="t sk" style="left:1437.50px;top:767.46px;font-size:16.00px;line-height:0;color:#eeeeee;letter-spacing:0.00px;">语言</div>
<div class="a" style="left:1473.60px;top:763.80px;width:2.60px;height:2.60px;border-radius:1px;background:#eeeeee"></div><div class="a" style="left:1473.60px;top:770.60px;width:2.60px;height:2.60px;border-radius:1px;background:#eeeeee"></div>
<div class="t sk" style="left:1486.10px;top:767.11px;font-size:17.00px;line-height:0;color:#eeeeee;letter-spacing:0.00px;">PHP</div>
<div class="red" style="left:257px;top:180px;width:100px;height:29px"></div>
<div class="red" style="left:421px;top:182px;width:259px;height:40px"></div>
</body></html>
